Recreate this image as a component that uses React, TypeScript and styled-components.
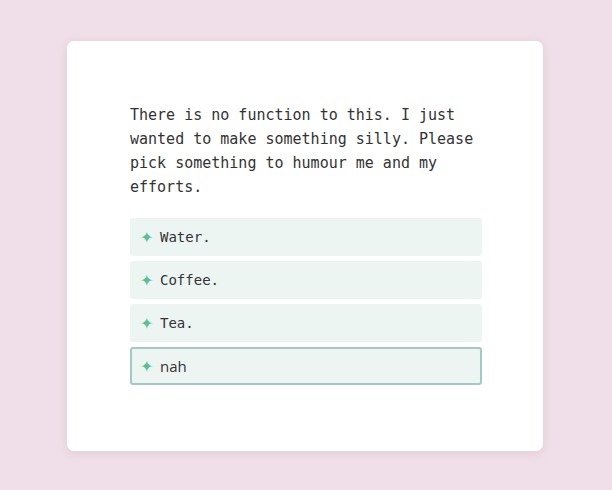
import {FC} from "react";
import styled, {createGlobalStyle} from "styled-components";

const GlobalStyle = createGlobalStyle`
  * {
    box-sizing: border-box;
  }
  html, body {
    margin: 0;
    padding: 0;
    background: #f0dfe8;
  }
`

const options = ["Water.", "Coffee.", "Tea."]

const Option: FC<{label: string, active?: boolean}> = ({label, active = false}) => (
    <Choice $active={active}>
        <Star>✦</Star>
        <Label $active={active}>{label}</Label>
    </Choice>
)

export default function App() {
    return (
        <Page>
            <GlobalStyle/>
            <Card>
                <Text>
                    There is no function to this. I just wanted to make something silly. Please pick something to
                    humour me and my efforts.
                </Text>
                <List>
                    {options.map(o => <Option key={o} label={o}/>)}
                    <Option label="nah" active/>
                </List>
            </Card>
        </Page>
    )
}

const Page = styled.div`
  width: 612px;
  height: 490px;
  padding: 41px 0 0 67px;
  display: flex;
  align-items: flex-start;
`

const Card = styled.div`
  width: 476px;
  height: 410px;
  background: white;
  border-radius: 7px;
  box-shadow: 0 2px 10px rgba(150, 110, 130, 0.18);
  padding: 62px 61px 0 63px;
`

const Text = styled.p`
  margin: 0;
  font-family: "DejaVu Sans Mono", "Liberation Mono", monospace;
  font-size: 15px;
  line-height: 24px;
  color: #333;
  letter-spacing: 0;
`

const List = styled.div`
  margin-top: 19px;
  display: flex;
  flex-direction: column;
  gap: 5px;
`

const Choice = styled.div<{$active: boolean}>`
  height: 38px;
  display: flex;
  align-items: center;
  padding-left: ${({$active}) => $active ? "8px" : "10px"};
  background: #edf5f3;
  border-radius: 3px;
  border: ${({$active}) => $active ? "2px solid #a3c9c3" : "none"};
`

const Star = styled.span`
  color: #5cbf9a;
  font-family: "DejaVu Sans", sans-serif;
  font-size: 16px;
  width: 20px;
`

const Label = styled.span<{$active: boolean}>`
  font-family: ${({$active}) => $active ? `"Open Sans", sans-serif` : `"DejaVu Sans Mono", monospace`};
  font-size: ${({$active}) => $active ? "15px" : "14px"};
  color: #333;
`
